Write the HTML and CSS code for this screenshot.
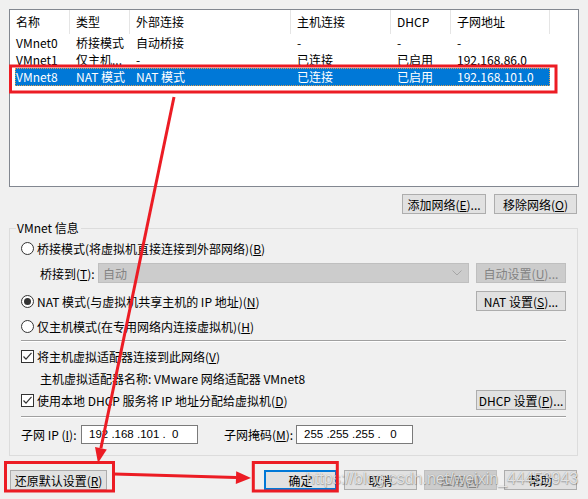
FILE: index.html
```html
<!DOCTYPE html>
<html lang="zh-CN">
<head>
<meta charset="utf-8">
<title>虚拟网络编辑器</title>
<link rel="stylesheet" href="styles.css">
</head>
<body>
<div class="dialog">
  <div class="list">
    <div class="lv-head">
      <div class="hc w1">名称</div>
      <div class="hc w2">类型</div>
      <div class="hc w3">外部连接</div>
      <div class="hc w4">主机连接</div>
      <div class="hc w5">DHCP</div>
      <div class="hc w6">子网地址</div>
    </div>
    <div class="lv-row">
      <div class="cc first">VMnet0</div>
      <div class="cc w2">桥接模式</div>
      <div class="cc w3">自动桥接</div>
      <div class="cc w4">-</div>
      <div class="cc w5">-</div>
      <div class="cc w6">-</div>
    </div>
    <div class="lv-row">
      <div class="cc first">VMnet1</div>
      <div class="cc w2">仅主机...</div>
      <div class="cc w3">-</div>
      <div class="cc w4">已连接</div>
      <div class="cc w5">已启用</div>
      <div class="cc w6">192.168.86.0</div>
    </div>
    <div class="lv-row selected">
      <div class="cc first">VMnet8</div>
      <div class="cc w2">NAT 模式</div>
      <div class="cc w3">NAT 模式</div>
      <div class="cc w4">已连接</div>
      <div class="cc w5">已启用</div>
      <div class="cc w6">192.168.101.0</div>
    </div>
  </div>

  <div class="list-actions">
    <button class="btn add">添加网络(<u>E</u>)...</button>
    <button class="btn remove">移除网络(<u>O</u>)</button>
  </div>

  <fieldset class="group">
    <legend>VMnet 信息</legend>
    <div class="group-body">
      <div class="row r1">
        <span class="radio"></span>
        <span class="lbl">桥接模式(将虚拟机直接连接到外部网络)(<u>B</u>)</span>
      </div>
      <div class="row r2">
        <span class="bridge-lbl">桥接到(<u>T</u>):</span>
        <div class="combo disabled">
          <span>自动</span>
          <svg class="chev" width="10" height="6" viewBox="0 0 10 6"><polyline points="0.5,0.5 5,5 9.5,0.5" fill="none" stroke="#a6a6a6" stroke-width="1"/></svg>
        </div>
        <button class="btn side disabled">自动设置(<u>U</u>)...</button>
      </div>
      <div class="row r3">
        <span class="radio checked"></span>
        <span class="lbl">NAT 模式(与虚拟机共享主机的 IP 地址)(<u>N</u>)</span>
        <button class="btn side push">NAT 设置(<u>S</u>)...</button>
      </div>
      <div class="row r4">
        <span class="radio"></span>
        <span class="lbl">仅主机模式(在专用网络内连接虚拟机)(<u>H</u>)</span>
      </div>
      <div class="sep s1"></div>
      <div class="row r5">
        <span class="check"><svg width="11" height="11" viewBox="0 0 11 11"><polyline points="1.5,5.5 4,8.2 9.5,1.8" fill="none" stroke="#333" stroke-width="1.2"/></svg></span>
        <span class="lbl">将主机虚拟适配器连接到此网络(<u>V</u>)</span>
      </div>
      <div class="row r6">
        <span class="adapter">主机虚拟适配器名称: VMware 网络适配器 VMnet8</span>
      </div>
      <div class="row r7">
        <span class="check"><svg width="11" height="11" viewBox="0 0 11 11"><polyline points="1.5,5.5 4,8.2 9.5,1.8" fill="none" stroke="#333" stroke-width="1.2"/></svg></span>
        <span class="lbl">使用本地 DHCP 服务将 IP 地址分配给虚拟机(<u>D</u>)</span>
        <button class="btn side push">DHCP 设置(<u>P</u>)...</button>
      </div>
      <div class="sep s2"></div>
      <div class="row r8">
        <span class="ip-lbl">子网 IP (<u>I</u>):</span>
        <div class="ipbox">192 .168 .101 .  0</div>
        <span class="mask-lbl">子网掩码(<u>M</u>):</span>
        <div class="ipbox">255 .255 .255 .   0</div>
      </div>
    </div>
  </fieldset>

  <div class="footer">
    <button class="btn restore">还原默认设置(<u>R</u>)</button>
    <div class="footer-right">
      <button class="btn fb default">确定</button>
      <button class="btn fb">取消</button>
      <button class="btn fb disabled">应用(<u>A</u>)</button>
      <button class="btn fb">帮助</button>
    </div>
  </div>

  <div class="watermark">https://blog.csdn.net/weixin_44453943</div>

  <svg class="annot" width="588" height="499" viewBox="0 0 588 499">
    <g fill="none" stroke="#ec1c24" stroke-width="3">
      <rect x="10.5" y="66" width="545.5" height="26"/>
      <rect x="5.5" y="462.5" width="108" height="28.5"/>
      <rect x="253.3" y="462.5" width="84" height="28.5"/>
      <line x1="174" y1="97" x2="100.9" y2="448.3" stroke-width="3"/>
      <line x1="114" y1="474" x2="236" y2="477.6" stroke-width="3"/>
    </g>
    <g fill="#ec1c24">
      <polygon points="98,463 106.8,449.5 95,447.1"/>
      <polygon points="251,478 236.2,471.2 235.8,484"/>
    </g>
  </svg>
</div>
</body>
</html>
```

FILE: styles.css
```css
* { box-sizing: border-box; }

html, body {
  margin: 0;
  padding: 0;
  background: #f0f0f0;
}

.dialog {
  position: relative;
  width: 588px;
  height: 499px;
  padding: 9px 9px 0 9px;
  background: #f0f0f0;
  font-family: "Noto Sans CJK SC", "Noto Sans", sans-serif;
  font-size: 12px;
  color: #000;
  overflow: hidden;
}

u { text-decoration: underline; text-underline-offset: 1px; }

/* ---- list view ---- */
.list {
  height: 178px;
  background: #fff;
  border: 1px solid #828790;
}

.lv-head {
  display: flex;
  height: 24px;
}

.hc {
  height: 24px;
  line-height: 24px;
  padding-left: 6px;
  border-right: 1px solid #e5e5e5;
  white-space: nowrap;
  color: #000;
}

.w1 { width: 60px; }
.w2 { width: 60px; }
.w3 { width: 161px; }
.w4 { width: 100px; }
.w5 { width: 60px; }
.w6 { width: 99px; }

.lv-row {
  display: flex;
  height: 17px;
  margin-left: 5px;
  width: 535px;
  line-height: 17px;
}

.cc {
  padding-left: 6px;
  white-space: nowrap;
  overflow: hidden;
}

.cc.first {
  width: 55px;
  padding-left: 1px;
}

.lv-row.selected {
  background: #0078d7;
  color: #fff;
  outline: 1px dotted #e0a050;
  outline-offset: -1px;
  height: 18px;
}

/* ---- buttons ---- */
.btn {
  font: inherit;
  color: #000;
  background: #e1e1e1;
  border: 1px solid #adadad;
  height: 20px;
  padding: 0;
  margin: 0;
  line-height: 17px;
  white-space: nowrap;
}

.btn.disabled {
  background: #cccccc;
  border-color: #bfbfbf;
  color: #838383;
}

.list-actions {
  display: flex;
  justify-content: flex-end;
  gap: 8px;
  margin-top: 7px;
  padding-right: 2px;
}

.btn.add { width: 84px; }
.btn.remove { width: 83px; }

/* ---- group ---- */
.group {
  margin: 6px 1px 0 0;
  padding: 0;
  border: 1px solid #dcdcdc;
  min-width: 0;
}

.group legend {
  margin-left: 6px;
  padding: 0 2px 0 1px;
  line-height: 16px;
  color: #000;
}

.group-body {
  display: flex;
  flex-direction: column;
  padding: 0 11px 11px 11px;
}

.row {
  display: flex;
  align-items: center;
  height: 20px;
}

.r1 { margin-top: 2px; }
.r2 { margin-top: 5px; }
.r3 { margin-top: 8px; }
.r4 { margin-top: 5px; }
.r5 { margin-top: 4px; }
.r6 { margin-top: 2px; }
.r7 { margin-top: 2px; }
.r8 { margin-top: 6px; }

.sep {
  height: 2px;
  border-top: 1px solid #a0a0a0;
  border-bottom: 1px solid #ffffff;
}
.s1 { margin-top: 4px; }
.s2 { margin-top: 6px; }

.radio {
  width: 13px;
  height: 13px;
  border: 1px solid #333;
  border-radius: 50%;
  background: #fff;
  flex: none;
  position: relative;
}

.radio.checked::after {
  content: "";
  position: absolute;
  left: 2px;
  top: 2px;
  width: 7px;
  height: 7px;
  border-radius: 50%;
  background: #333;
}

.check {
  width: 13px;
  height: 13px;
  border: 1px solid #333;
  background: #fff;
  flex: none;
  display: flex;
  align-items: center;
  justify-content: center;
}

.check svg { display: block; }

.lbl {
  margin-left: 3px;
  white-space: nowrap;
}

.bridge-lbl {
  padding-left: 19px;
  width: 77px;
  flex: none;
  white-space: nowrap;
}

.combo {
  width: 371px;
  height: 20px;
  display: flex;
  align-items: center;
  justify-content: space-between;
  padding: 0 6px 0 4px;
  border: 1px solid #bfbfbf;
  background: #cccccc;
  color: #838383;
}

.chev { display: block; }

.btn.side {
  width: 90px;
  margin-left: 7px;
}

.btn.push { margin-left: auto; }

.adapter {
  padding-left: 19px;
  white-space: nowrap;
}

.ip-lbl {
  width: 60px;
  flex: none;
  white-space: nowrap;
}

.ipbox {
  width: 117px;
  height: 19px;
  background: #fff;
  border: 1px solid #7a7a7a;
  font-family: "Liberation Sans", sans-serif;
  font-size: 11.5px;
  line-height: 17px;
  padding-left: 7px;
  white-space: pre;
}

.mask-lbl {
  margin-left: 26px;
  width: 72px;
  flex: none;
  white-space: nowrap;
}

/* ---- footer ---- */
.footer {
  display: flex;
  justify-content: space-between;
  margin-top: 14px;
  padding-left: 1px;
  padding-right: 2px;
}

.btn.restore { width: 97px; }

.footer-right {
  display: flex;
  gap: 7px;
}

.btn.fb { width: 73px; }

.btn.default {
  border: 2px solid #0078d7;
}

/* ---- overlays ---- */
.watermark {
  position: absolute;
  left: 306px;
  top: 469px;
  font-family: "Liberation Sans", sans-serif;
  font-size: 16px;
  line-height: 20px;
  color: rgba(255, 255, 255, 0.75);
  text-shadow: 0 0 1px rgba(0, 0, 0, 0.35), 0.5px 0.5px 1px rgba(0, 0, 0, 0.25);
  white-space: nowrap;
  pointer-events: none;
}

.annot {
  position: absolute;
  left: 0;
  top: 0;
  pointer-events: none;
}
```
